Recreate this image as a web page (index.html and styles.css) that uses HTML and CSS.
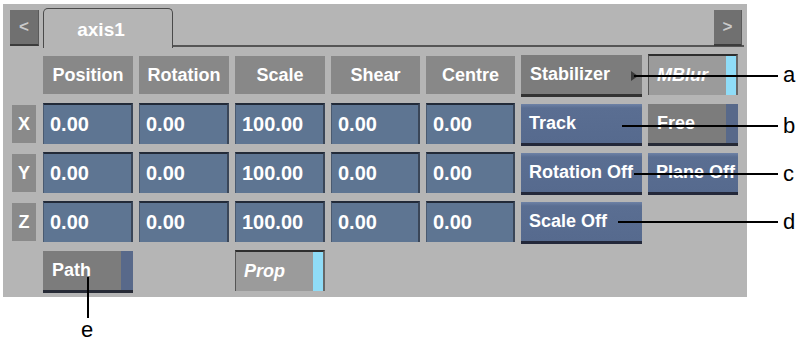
FILE: index.html
```html
<!DOCTYPE html>
<html>
<head>
<meta charset="utf-8">
<link rel="stylesheet" href="styles.css">
</head>
<body>
<div class="panel">
  <div class="tabbar">
    <div class="nav">&lt;</div>
    <div class="tab">axis1</div>
    <div class="tabrest"><div class="nav">&gt;</div></div>
  </div>
  <div class="grid">
    <div></div>
    <div class="hdr">Position</div>
    <div class="hdr">Rotation</div>
    <div class="hdr">Scale</div>
    <div class="hdr">Shear</div>
    <div class="hdr">Centre</div>
    <div class="btn gray">Stabilizer</div>
    <div class="toggle">MBlur</div>

    <div class="axis">X</div>
    <div class="val">0.00</div>
    <div class="val">0.00</div>
    <div class="val">100.00</div>
    <div class="val">0.00</div>
    <div class="val">0.00</div>
    <div class="btn blue">Track</div>
    <div class="btn gray striped">Free</div>

    <div class="axis">Y</div>
    <div class="val">0.00</div>
    <div class="val">0.00</div>
    <div class="val">100.00</div>
    <div class="val">0.00</div>
    <div class="val">0.00</div>
    <div class="btn blue">Rotation Off</div>
    <div class="btn blue">Plane Off</div>

    <div class="axis">Z</div>
    <div class="val">0.00</div>
    <div class="val">0.00</div>
    <div class="val">100.00</div>
    <div class="val">0.00</div>
    <div class="val">0.00</div>
    <div class="btn blue">Scale Off</div>
    <div></div>

    <div></div>
    <div class="btn gray striped">Path</div>
    <div></div>
    <div class="toggle">Prop</div>
  </div>
</div>
<svg class="callouts" width="805" height="342" viewBox="0 0 805 342">
  <polygon points="631,71 638,76 631,81" fill="#3a3a3a"/>
  <line x1="634" y1="76" x2="778" y2="76" stroke="#000" stroke-width="2"/>
  <line x1="622" y1="126" x2="778" y2="126" stroke="#000" stroke-width="2"/>
  <line x1="634" y1="174" x2="778" y2="174" stroke="#000" stroke-width="2"/>
  <line x1="618" y1="222" x2="778" y2="222" stroke="#000" stroke-width="2"/>
  <line x1="88" y1="277" x2="88" y2="318" stroke="#000" stroke-width="2"/>
  <text x="783" y="82" class="lbl">a</text>
  <text x="783" y="133" class="lbl">b</text>
  <text x="783" y="181" class="lbl">c</text>
  <text x="783" y="229" class="lbl">d</text>
  <text x="81" y="337" class="lbl">e</text>
</svg>
</body>
</html>
```
FILE: styles.css
```css
html, body {
  margin: 0;
  padding: 0;
  background: #ffffff;
}
body {
  position: relative;
  width: 805px;
  height: 342px;
  overflow: hidden;
  font-family: "Liberation Sans", Arial, sans-serif;
}
.panel {
  margin: 4px 0 0 3px;
  width: 744px;
  height: 293px;
  background: #b5b5b5;
  box-sizing: border-box;
}
.tabbar {
  display: flex;
  height: 44px;
  padding: 0 3px 0 7px;
}
.nav {
  width: 29px;
  height: 36px;
  margin-top: 6px;
  box-sizing: border-box;
  background: #707070;
  border-bottom: 2px solid #3c3c3c;
  border-right: 1px solid #5a5a5a;
  color: #c9c9c9;
  font-size: 17px;
  font-weight: bold;
  display: flex;
  align-items: center;
  justify-content: center;
}
.tab {
  margin-left: 4px;
  margin-top: 4px;
  width: 130px;
  height: 40px;
  box-sizing: border-box;
  border: 1px solid #4a4a4a;
  border-bottom: none;
  border-radius: 5px 5px 0 0;
  color: #ffffff;
  font-weight: bold;
  font-size: 19px;
  display: flex;
  align-items: center;
  justify-content: center;
  padding: 2px 14px 0 0;
}
.tabrest {
  flex: 1;
  display: flex;
  justify-content: flex-end;
  align-items: flex-start;
  border-bottom: 2px solid #555555;
  margin-bottom: -1px;
  height: 43px;
  box-sizing: border-box;
  padding-right: 2px;
}
.tabrest .nav {
  width: 28px;
}
.grid {
  display: grid;
  grid-template-columns: 25px 90px 90px 90px 89px 89px 121px 90px;
  grid-template-rows: 42px 42px 42px 42px 43px;
  column-gap: 6px;
  row-gap: 7px;
  padding: 7px 0 0 9px;
  align-items: start;
}
.hdr {
  margin-top: 1px;
  height: 38px;
  background: #888888;
  color: #ffffff;
  font-weight: bold;
  font-size: 18px;
  display: flex;
  align-items: center;
  justify-content: center;
}
.axis {
  margin-top: 1px;
  height: 38px;
  width: 24px;
  background: #8a8a8a;
  color: #ffffff;
  font-weight: bold;
  font-size: 18px;
  display: flex;
  align-items: center;
  justify-content: center;
}
.val {
  margin-top: -1px;
  height: 41px;
  box-sizing: border-box;
  background: #5e7592;
  border-top: 2px solid #222a38;
  border-left: 1px solid #4a5a70;
  border-right: 2px solid #3a4658;
  color: #ffffff;
  font-weight: bold;
  font-size: 20px;
  display: flex;
  align-items: center;
  padding-left: 6px;
}
.btn {
  height: 42px;
  box-sizing: border-box;
  color: #ffffff;
  font-weight: bold;
  font-size: 18px;
  display: flex;
  align-items: center;
  padding-left: 8px;
  border-bottom: 3px solid #23283a;
  white-space: nowrap;
}
.btn.gray {
  background: #7c7c7c;
  border-bottom-color: #333333;
  padding-left: 9px;
}
.btn.striped {
  background: linear-gradient(to right, #7c7c7c 0, #7c7c7c calc(100% - 12px), #58698a calc(100% - 12px));
  border-bottom-color: #262a36;
}
.btn.blue {
  background: linear-gradient(to bottom, #6e82a6 0, #5a6e92 4px, #566a8e 100%);
}
.toggle {
  margin-top: -1px;
  height: 41px;
  box-sizing: border-box;
  border-top: 2px solid #2e2e2e;
  border-left: 1px solid #555555;
  border-right: 2px solid #666666;
  background: linear-gradient(to right, #9b9b9b 0, #9b9b9b calc(100% - 10px), #8fdcf7 calc(100% - 10px));
  color: #ffffff;
  font-weight: bold;
  font-style: italic;
  font-size: 18px;
  display: flex;
  align-items: center;
  padding-left: 8px;
}
.callouts {
  position: absolute;
  left: 0;
  top: 0;
  pointer-events: none;
}
.lbl {
  font-family: "Liberation Sans", Arial, sans-serif;
  font-size: 22px;
  fill: #000000;
}
```
